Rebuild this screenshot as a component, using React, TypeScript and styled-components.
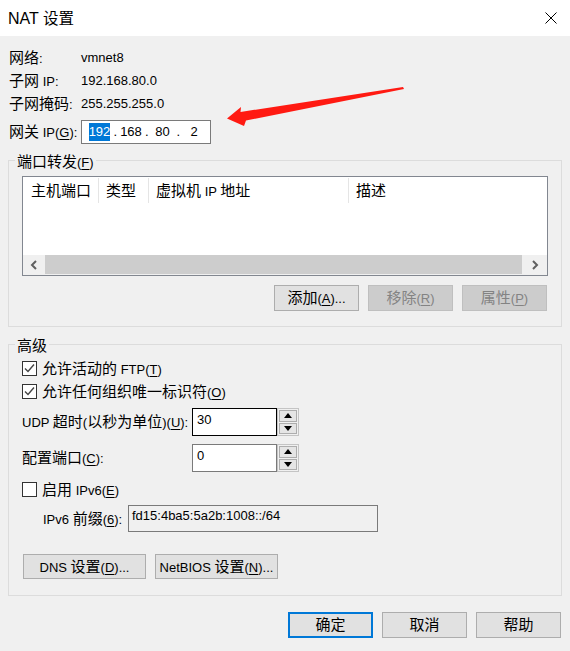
import React from "react";
import styled, { createGlobalStyle } from "styled-components";

const GlobalStyle = createGlobalStyle`
  html, body { margin: 0; padding: 0; background: #f0f0f0; }
  body {
    font-family: "Liberation Sans", Arial, sans-serif;
    font-size: 13px;
    color: #000;
    line-height: 18px;
  }
  * { box-sizing: border-box; }
`;

/* ---------- text helpers ---------- */
const Cjk = styled.span<{ $size: number }>`
  font-family: "Noto Sans CJK SC", "Noto Sans", sans-serif;
  font-size: ${(p) => p.$size}px;
`;

const Mn = styled.span`
  text-decoration: underline;
  text-underline-offset: 2px;
  text-decoration-thickness: 1px;
`;

const Phrase = styled.span`
  white-space: pre;
`;

type Run = { k: "c" | "l"; s: string; u: boolean };
const isCjk = (ch: string) => /[\u2e80-\u9fff\u3000-\u303f\uff00-\uffef]/.test(ch);
function toRuns(t: string): Run[] {
  const out: Run[] = [];
  for (let i = 0; i < t.length; i++) {
    let ch = t[i];
    let u = false;
    if (ch === "&" && i + 1 < t.length) {
      u = true;
      ch = t[++i];
    }
    const k = isCjk(ch) ? "c" : "l";
    const last = out[out.length - 1];
    if (last && last.k === k && !last.u && !u) last.s += ch;
    else out.push({ k, s: ch, u });
  }
  return out;
}
function Txt({ t, cjk = 15 }: { t: string; cjk?: number }) {
  return (
    <Phrase>
      {toRuns(t).map((r, i) => {
        const inner = r.u ? <Mn>{r.s}</Mn> : r.s;
        return r.k === "c" ? (
          <Cjk key={i} $size={cjk}>
            {inner}
          </Cjk>
        ) : (
          <React.Fragment key={i}>{inner}</React.Fragment>
        );
      })}
    </Phrase>
  );
}

/* ---------- window ---------- */
const Window = styled.div`
  position: relative;
  width: 570px;
  height: 651px;
  background: #f0f0f0;
  display: flex;
  flex-direction: column;
  overflow: hidden;
`;

const TitleBar = styled.div`
  height: 36px;
  background: #fff;
  display: flex;
  align-items: center;
  justify-content: space-between;
  padding: 0 13px 1px 8px;
`;

const TitleText = styled.div`
  font-size: 16px;
  line-height: 20px;
`;

const Body = styled.div`
  display: flex;
  flex-direction: column;
  padding: 10px 8px 0;
`;

/* ---------- info rows ---------- */
const Info = styled.div`
  display: flex;
  flex-direction: column;
  padding-left: 1px;
`;

const InfoRow = styled.div<{ $h: number; $mt?: number }>`
  display: grid;
  grid-template-columns: 72px auto;
  align-items: center;
  height: ${(p) => p.$h}px;
  margin-top: ${(p) => p.$mt ?? 0}px;
`;

const Label = styled.div`
  white-space: nowrap;
`;

const IpBox = styled.div`
  width: 130px;
  height: 24px;
  background: #fff;
  border: 1px solid #7a7a7a;
  display: flex;
  align-items: center;
  padding-left: 6px;
`;

const IpField = styled.span`
  width: 23px;
  text-align: center;
  display: inline-flex;
  justify-content: center;
`;

const IpDot = styled.span`
  width: 8.5px;
  text-align: center;
`;

const Selected = styled.span`
  background: #0078d7;
  color: #fff;
  padding: 0;
  line-height: 18px;
`;

/* ---------- group box ---------- */
const Group = styled.fieldset<{ $mt: number }>`
  margin: ${(p) => p.$mt}px 0 0;
  padding: 0;
  border: 1px solid #dcdcdc;
  min-width: 0;
`;

const Legend = styled.legend`
  margin-left: 6px;
  padding: 0 2px;
  height: 19px;
  line-height: 19px;
`;

const GroupBody = styled.div<{ $pt: number; $pb: number }>`
  display: flex;
  flex-direction: column;
  padding: ${(p) => p.$pt}px 13px ${(p) => p.$pb}px;
`;

/* ---------- list view ---------- */
const ListView = styled.div`
  height: 100px;
  border: 1px solid #828790;
  background: #fff;
  display: flex;
  flex-direction: column;
`;

const Header = styled.div`
  height: 26px;
  display: flex;
`;

const HeaderCell = styled.div<{ $w?: number; $pl: number; $last?: boolean }>`
  ${(p) => (p.$w ? `width: ${p.$w}px;` : "flex: 1;")}
  padding-left: ${(p) => p.$pl}px;
  display: flex;
  align-items: center;
  white-space: nowrap;
  margin: 1px 0 0;
  border-right: ${(p) => (p.$last ? "none" : "1px solid #e5e5e5")};
`;

const ListBody = styled.div`
  flex: 1;
`;

const HScroll = styled.div`
  height: 20px;
  background: #f0f0f0;
  display: flex;
`;

const ScrollBtn = styled.div<{ $w: number }>`
  width: ${(p) => p.$w}px;
  display: flex;
  align-items: center;
  justify-content: center;
`;

const Thumb = styled.div`
  flex: 1;
  background: #cdcdcd;
  margin-bottom: 1px;
`;

/* ---------- buttons ---------- */
const ButtonRow = styled.div<{ $mt: number; $end?: boolean; $pad?: string }>`
  display: flex;
  justify-content: ${(p) => (p.$end ? "flex-end" : "flex-start")};
  gap: 9px;
  margin-top: ${(p) => p.$mt}px;
  padding: ${(p) => p.$pad ?? "0"};
`;

const Btn = styled.div<{ $w: number; $h?: number; $disabled?: boolean; $default?: boolean }>`
  width: ${(p) => p.$w}px;
  height: ${(p) => p.$h ?? 26}px;
  display: flex;
  align-items: center;
  justify-content: center;
  white-space: nowrap;
  background: ${(p) => (p.$disabled ? "#cccccc" : "#e1e1e1")};
  color: ${(p) => (p.$disabled ? "#838383" : "#000")};
  border: ${(p) =>
    p.$default ? "2px solid #0078d7" : p.$disabled ? "1px solid #bfbfbf" : "1px solid #adadad"};
`;

/* ---------- advanced ---------- */
const CheckRow = styled.div<{ $mt?: number }>`
  height: 23px;
  display: flex;
  align-items: center;
  gap: 5px;
  margin-top: ${(p) => p.$mt ?? 0}px;
`;

const Box = styled.div`
  width: 15px;
  height: 15px;
  border: 1px solid #333;
  background: #fff;
  display: flex;
  align-items: center;
  justify-content: center;
  flex-shrink: 0;
`;

const FieldRow = styled.div<{ $cols: string; $h: number; $mt: number; $pl?: number }>`
  display: grid;
  grid-template-columns: ${(p) => p.$cols};
  align-items: center;
  height: ${(p) => p.$h}px;
  margin-top: ${(p) => p.$mt}px;
  padding-left: ${(p) => p.$pl ?? 0}px;
`;

const Spinner = styled.div`
  display: flex;
  height: 28px;
`;

const NumInput = styled.div<{ $focus?: boolean }>`
  width: 85px;
  height: 28px;
  background: #fff;
  border: 1px solid ${(p) => (p.$focus ? "#000" : "#7a7a7a")};
  padding: 2px 4px;
`;

const SpinCol = styled.div`
  width: 22px;
  height: 28px;
  border: 1px solid #c4c4c4;
  padding: 1px;
  display: flex;
  flex-direction: column;
  gap: 1px;
`;

const SpinBtn = styled.div`
  flex: 1;
  background: #e5e5e5;
  border: 1px solid #adadad;
  display: flex;
  align-items: center;
  justify-content: center;
`;

const PrefixInput = styled.div`
  width: 250px;
  height: 27px;
  background: #f0f0f0;
  border: 1px solid #7a7a7a;
  padding: 1px 3px;
`;

const Overlay = styled.svg`
  position: absolute;
  left: 0;
  top: 0;
  width: 570px;
  height: 651px;
  pointer-events: none;
`;

/* ---------- icons ---------- */
const CloseIcon = () => (
  <svg width="12" height="12" viewBox="0 0 12 12">
    <path d="M0.5 0.5 L11.5 11.5 M11.5 0.5 L0.5 11.5" stroke="#000" strokeWidth="1" fill="none" />
  </svg>
);

const Check = () => (
  <svg width="13" height="13" viewBox="0 0 13 13">
    <polyline points="2,6.5 5,9.5 11,2.5" stroke="#444" strokeWidth="1.4" fill="none" />
  </svg>
);

const Chevron = ({ dir }: { dir: "l" | "r" }) => (
  <svg width="8" height="10" viewBox="0 0 8 10">
    <polyline
      points={dir === "l" ? "6,1 2,5 6,9" : "2,1 6,5 2,9"}
      stroke="#606060"
      strokeWidth="2"
      fill="none"
    />
  </svg>
);

const Tri = ({ up }: { up?: boolean }) => (
  <svg width="8" height="5" viewBox="0 0 8 5">
    <polygon points={up ? "0,5 8,5 4,0" : "0,0 8,0 4,5"} fill="#000" />
  </svg>
);

export default function App() {
  return (
    <>
      <GlobalStyle />
      <Window>
        <TitleBar>
          <TitleText>
            <Txt t="NAT 设置" cjk={15.5} />
          </TitleText>
          <CloseIcon />
        </TitleBar>
        <Body>
          <Info>
            <InfoRow $h={23}>
              <Label><Txt t="网络:" /></Label>
              <div>vmnet8</div>
            </InfoRow>
            <InfoRow $h={23}>
              <Label><Txt t="子网 IP:" /></Label>
              <div>192.168.80.0</div>
            </InfoRow>
            <InfoRow $h={24}>
              <Label><Txt t="子网掩码:" /></Label>
              <div>255.255.255.0</div>
            </InfoRow>
            <InfoRow $h={24} $mt={4}>
              <Label><Txt t="网关 IP(&G):" /></Label>
              <IpBox>
                <IpField><Selected>192</Selected></IpField>
                <IpDot>.</IpDot>
                <IpField>168</IpField>
                <IpDot>.</IpDot>
                <IpField>80</IpField>
                <IpDot>.</IpDot>
                <IpField>2</IpField>
              </IpBox>
            </InfoRow>
          </Info>

          <Group $mt={7}>
            <Legend><Txt t="端口转发(&F)" /></Legend>
            <GroupBody $pt={6} $pb={15}>
              <ListView>
                <Header>
                  <HeaderCell $w={76} $pl={8}><Txt t="主机端口" /></HeaderCell>
                  <HeaderCell $w={50} $pl={7}><Txt t="类型" /></HeaderCell>
                  <HeaderCell $w={200} $pl={7}><Txt t="虚拟机 IP 地址" /></HeaderCell>
                  <HeaderCell $pl={7} $last><Txt t="描述" /></HeaderCell>
                </Header>
                <ListBody />
                <HScroll>
                  <ScrollBtn $w={22}><Chevron dir="l" /></ScrollBtn>
                  <Thumb />
                  <ScrollBtn $w={25}><Chevron dir="r" /></ScrollBtn>
                </HScroll>
              </ListView>
              <ButtonRow $mt={9} $end $pad="0 1px 0 0">
                <Btn $w={85}><Txt t="添加(&A)..." /></Btn>
                <Btn $w={85} $disabled><Txt t="移除(&R)" /></Btn>
                <Btn $w={85} $disabled><Txt t="属性(&P)" /></Btn>
              </ButtonRow>
            </GroupBody>
          </Group>

          <Group $mt={8}>
            <Legend><Txt t="高级" /></Legend>
            <GroupBody $pt={3} $pb={16}>
              <CheckRow>
                <Box><Check /></Box>
                <Txt t="允许活动的 FTP(&T)" />
              </CheckRow>
              <CheckRow>
                <Box><Check /></Box>
                <Txt t="允许任何组织唯一标识符(&O)" />
              </CheckRow>
              <FieldRow $cols="170px auto" $h={28} $mt={5}>
                <Label><Txt t="UDP 超时(以秒为单位)(&U):" /></Label>
                <Spinner>
                  <NumInput $focus>30</NumInput>
                  <SpinCol>
                    <SpinBtn><Tri up /></SpinBtn>
                    <SpinBtn><Tri /></SpinBtn>
                  </SpinCol>
                </Spinner>
              </FieldRow>
              <FieldRow $cols="170px auto" $h={28} $mt={8}>
                <Label><Txt t="配置端口(&C):" /></Label>
                <Spinner>
                  <NumInput>0</NumInput>
                  <SpinCol>
                    <SpinBtn><Tri up /></SpinBtn>
                    <SpinBtn><Tri /></SpinBtn>
                  </SpinCol>
                </Spinner>
              </FieldRow>
              <CheckRow $mt={6}>
                <Box />
                <Txt t="启用 IPv6(&E)" />
              </CheckRow>
              <FieldRow $cols="85px auto" $h={27} $mt={4} $pl={21}>
                <Label><Txt t="IPv6 前缀(&6):" /></Label>
                <PrefixInput>fd15:4ba5:5a2b:1008::/64</PrefixInput>
              </FieldRow>
              <ButtonRow $mt={22} $pad="0 0 0 1px">
                <Btn $w={123} $h={25}><Txt t="DNS 设置(&D)..." /></Btn>
                <Btn $w={123} $h={25}><Txt t="NetBIOS 设置(&N)..." /></Btn>
              </ButtonRow>
            </GroupBody>
          </Group>

          <ButtonRow $mt={16} $end $pad="0 1px 0 0">
            <Btn $w={85} $default><Txt t="确定" /></Btn>
            <Btn $w={85}><Txt t="取消" /></Btn>
            <Btn $w={85}><Txt t="帮助" /></Btn>
          </ButtonRow>
        </Body>

        <Overlay viewBox="0 0 570 651">
          <polygon
            points="227,118.5 241,107 240.5,112 403,87 404,89 246,120.5 244,126"
            fill="#ff1a12"
          />
        </Overlay>
      </Window>
    </>
  );
}
